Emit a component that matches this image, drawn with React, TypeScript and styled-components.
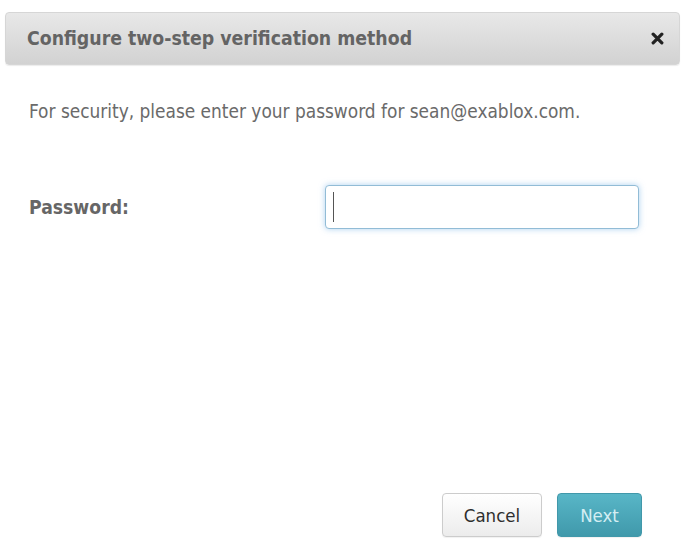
import React from "react";
import styled, { createGlobalStyle } from "styled-components";

const GlobalStyle = createGlobalStyle`
	html, body {
		margin: 0;
		padding: 0;
		background: #ffffff;
	}
	body {
		font-family: "DejaVu Sans Condensed", "DejaVu Sans", Tahoma, sans-serif;
	}
`;

// Dialog shell
const Dialog = styled.div`
	width: 686px;
	height: 556px;
	box-sizing: border-box;
	padding: 12px 6px 0 5px;
	display: flex;
	flex-direction: column;
	background: #ffffff;
`;

const Header = styled.div`
	height: 53px;
	box-sizing: border-box;
	display: flex;
	align-items: center;
	justify-content: space-between;
	padding: 0 15px 0 21px;
	border: 1px solid #d6d6d6;
	border-radius: 4px;
	background: linear-gradient(to bottom, #e8e8e8 0%, #d2d2d2 100%);
	box-shadow: 0 1px 1px rgba(0, 0, 0, 0.08);
`;

const Title = styled.h1`
	margin: 0;
	font-size: 19.3px;
	line-height: 22px;
	font-weight: bold;
	color: #646464;
`;

const CloseButton = styled.button`
	border: none;
	background: none;
	padding: 0;
	width: 14px;
	height: 14px;
	display: flex;
	align-items: center;
	justify-content: center;
	cursor: pointer;
`;

const Body = styled.div`
	flex: 1;
	display: flex;
	flex-direction: column;
	padding: 0 24px;
`;

const Intro = styled.p`
	margin: 35px 0 0;
	font-size: 18.9px;
	line-height: 22px;
	color: #6a6a6a;
`;

const FieldRow = styled.div`
	display: grid;
	grid-template-columns: 296px 314px;
	align-items: center;
	margin-top: 63px;
`;

const Label = styled.label`
	font-size: 19.2px;
	font-weight: bold;
	color: #666666;
`;

const InputWrap = styled.div`
	position: relative;
	display: flex;
`;

const PasswordInput = styled.input`
	flex: 1;
	height: 44px;
	box-sizing: border-box;
	border: 1px solid #92bcd6;
	border-radius: 4px;
	padding: 0 7px;
	font-size: 18px;
	outline: none;
	box-shadow: 0 0 6px rgba(120, 180, 230, 0.6);
	caret-color: transparent;
`;

// Text caret drawn over the empty, focused field
const Caret = styled.span`
	position: absolute;
	left: 8px;
	top: 7px;
	width: 1px;
	height: 30px;
	background: #555555;
	pointer-events: none;
`;

const Footer = styled.div`
	margin-top: auto;
	display: flex;
	justify-content: flex-end;
	gap: 15px;
	padding: 0 38px 19px 0;
`;

const Button = styled.button<{ $primary?: boolean }>`
	height: 44px;
	box-sizing: border-box;
	padding: 0;
	width: ${(p) => (p.$primary ? "85px" : "100px")};
	border-radius: 4px;
	font-family: inherit;
	font-size: 18.5px;
	cursor: pointer;
	border: 1px solid ${(p) => (p.$primary ? "#4198aa" : "#cccccc")};
	color: ${(p) => (p.$primary ? "#d4eef3" : "#2e2e2e")};
	background: ${(p) =>
		p.$primary
			? "linear-gradient(to bottom, #58b6c7 0%, #4099ab 100%)"
			: "linear-gradient(to bottom, #ffffff 0%, #ececec 100%)"};
	box-shadow: 0 1px 1px rgba(0, 0, 0, 0.06);
`;

export default function App() {
	const inputRef = React.useRef<HTMLInputElement>(null);
	const [value, setValue] = React.useState("");

	React.useEffect(() => {
		inputRef.current?.focus();
	}, []);

	return (
		<>
			<GlobalStyle />
			<Dialog>
				<Header>
					<Title>Configure two-step verification method</Title>
					<CloseButton aria-label="Close">
						<svg width="13" height="13" viewBox="0 0 12 12">
							<path
								d="M2 2 L10 10 M10 2 L2 10"
								stroke="#222"
								strokeWidth="3"
								strokeLinecap="round"
							/>
						</svg>
					</CloseButton>
				</Header>
				<Body>
					<Intro>
						For security, please enter your password for sean@exablox.com.
					</Intro>
					<FieldRow>
						<Label htmlFor="pw">Password:</Label>
						<InputWrap>
							<PasswordInput
								id="pw"
								type="password"
								ref={inputRef}
								value={value}
								onChange={(e) => setValue(e.target.value)}
							/>
							{value === "" && <Caret />}
						</InputWrap>
					</FieldRow>
				</Body>
				<Footer>
					<Button>Cancel</Button>
					<Button $primary>Next</Button>
				</Footer>
			</Dialog>
		</>
	);
}
